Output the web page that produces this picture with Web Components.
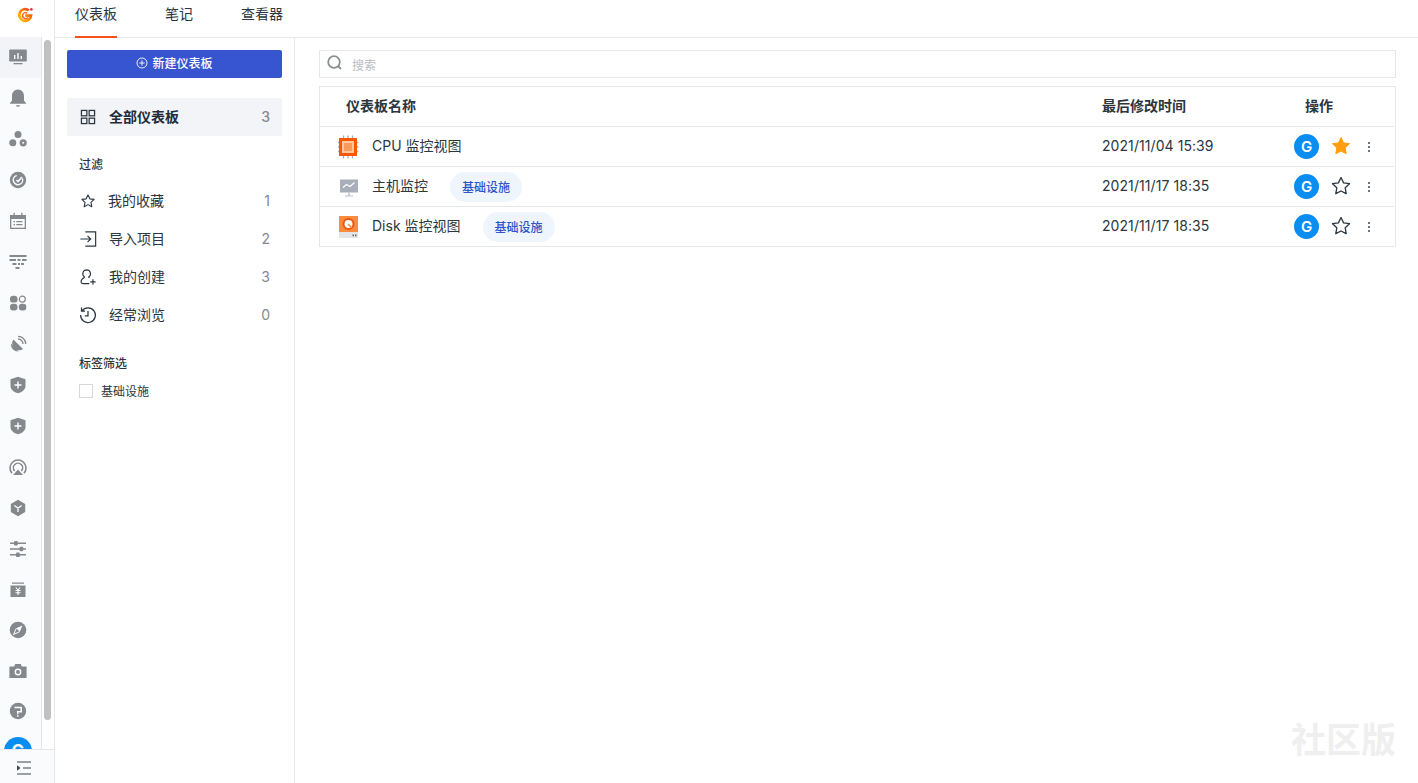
<!DOCTYPE html>
<html lang="zh">
<head>
<meta charset="utf-8">
<style>
html,body{margin:0;height:100%;overflow:hidden;background:#fff}
body{font-family:Inter,"Noto Sans CJK SC",sans-serif;color:#1f2d3a}
</style>
</head>
<body>
<x-app></x-app>
<script>
const ic={
monitor:'<path fill="currentColor" d="M2 2.500h16a.8.8 0 0 1 .8.8v10.400a.8.8 0 0 1-.8.8H2a.8.8 0 0 1-.8-.8V3.300a.8.8 0 0 1 .8-.8z"/><path fill="#fff" d="M6 8h1.400v4H6zM9.300 6h1.400v6H9.300zM12.600 9h1.400v3h-1.400z"/><path fill="currentColor" d="M5.500 16h9v1.300h-9z"/>',
bell:'<path fill="currentColor" d="M10 1.500c3.900 0 6 3 6 6.500v4.800l2 2.200v.8H2V15l2-2.200V8c0-3.500 2.100-6.500 6-6.500z"/><path fill="currentColor" d="M8 17.200h4a2 1.500 0 0 1-4 0z"/>',
cluster:'<circle fill="currentColor" cx="10" cy="5.500" r="3.500"/><circle fill="currentColor" cx="4.800" cy="13.800" r="3.500"/><circle fill="none" stroke="currentColor" stroke-width="2.600" cx="15.200" cy="13.800" r="2.300"/>',
check:'<circle fill="currentColor" cx="10" cy="10" r="8.200"/><circle fill="none" stroke="#fafbfd" stroke-width="1.500" cx="10" cy="10" r="4.700" stroke-dasharray="22 8" transform="rotate(-20 10 10)"/><path fill="none" stroke="#fafbfd" stroke-width="1.600" d="M8.500 10l1.500 1.500 4-4.500"/>',
calendar:'<path fill="currentColor" d="M2 4h16v14H2z"/><path fill="#fafbfd" d="M3.300 8h13.400v8.700H3.300z"/><path fill="currentColor" d="M5.500 1.800h1.300V5H5.500zM13.200 1.800h1.300V5h-1.300zM5.500 10h1.500v1.200H5.500zM8.300 10h6.200v1.200H8.300zM5.500 13h1.500v1.200H5.500zM8.300 13h6.200v1.200H8.300z"/>',
filter:'<path fill="currentColor" d="M1.500 3h17v2h-17zM1.500 7h6.500v2H1.500zM9.500 7h3v2h-3zM14 7h4.500v2H14zM4.500 11h4v2h-4zM10 11h2v2h-2zM13 11h3v2h-3zM7.500 15h4v2h-4z"/>',
apps:'<rect fill="currentColor" x="2" y="2.800" width="7.500" height="6.800" rx="3.200"/><circle fill="none" stroke="currentColor" stroke-width="1.200" cx="14.300" cy="6.200" r="3"/><rect fill="currentColor" x="2" y="10.800" width="7.500" height="6.800" rx="3"/><rect fill="currentColor" x="10.800" y="10.800" width="7.500" height="6.800" rx="3"/>',
dish:'<path fill="currentColor" d="M5.500 5.500l9.500 9.500a6.800 6.800 0 0 1-9.500-9.500z"/><path fill="currentColor" d="M3 9.500a7.200 7.200 0 0 0 7.500 8L3 9.500z"/><path fill="none" stroke="currentColor" stroke-width="1.300" d="M10 5a5 5 0 0 1 5 5M10 2.300a7.700 7.700 0 0 1 7.700 7.700"/>',
shield:'<path fill="currentColor" d="M10 1.800l7.500 2.400v6.800c0 3.700-3.300 6-7.500 7.300-4.200-1.300-7.500-3.600-7.500-7.300V4.200z"/><path fill="#fff" d="M9.300 6.500h1.400v2.800h2.800v1.400h-2.800v2.800H9.300v-2.800H6.500V9.300h2.800z"/>',
cast:'<path fill="none" stroke="currentColor" stroke-width="1.600" d="M3.900 16.200a8 8 0 1 1 12.200 0M6.700 14a4.600 4.600 0 1 1 6.600 0"/><path fill="currentColor" d="M10 12.500l5 5.500H5z"/>',
hex:'<path fill="currentColor" d="M10 1.800l7.200 4.100v8.200L10 18.200l-7.200-4.100V5.900z"/><path fill="none" stroke="#fff" stroke-width="1.300" d="M6.300 7.500L10 10l3.700-2.500M10 10v4"/>',
sliders:'<path fill="currentColor" d="M2 3.500h16v1.500H2zM2 9.300h16v1.500H2zM2 15.100h16v1.500H2z"/><rect fill="currentColor" x="6" y="2" width="3.800" height="4.500" rx="1.200"/><rect fill="currentColor" x="11.500" y="7.800" width="3.800" height="4.500" rx="1.200"/><rect fill="currentColor" x="8" y="13.600" width="3.800" height="4.500" rx="1.200"/>',
yuan:'<path fill="currentColor" d="M4 2.500h12v1.300H4zM2.500 5.500h15v11.500h-15z"/><path fill="none" stroke="#fff" stroke-width="1.100" d="M7.800 7.500L10 10l2.200-2.500M7.500 10.500h5M7.500 12.700h5M10 10v5"/>',
compass:'<circle fill="currentColor" cx="10" cy="10" r="8.300"/><path fill="#fff" d="M14.500 5.500l-2.800 6.200-3.400-3.400z"/><path fill="none" stroke="#fff" stroke-width="1" d="M8.300 8.300l-2.800 6.200 6.200-2.800"/>',
camera:'<path fill="currentColor" d="M2 5.500h4.200l1-2.500h5.600l1 2.500H18a.6.6 0 0 1 .6.600v10.300a.6.6 0 0 1-.6.600H2a.6.6 0 0 1-.6-.6V6.100a.6.6 0 0 1 .6-.6z"/><circle fill="none" stroke="#fff" stroke-width="1.400" cx="10" cy="11" r="2.700"/>',
help:'<circle fill="currentColor" cx="10" cy="10" r="8.200"/><path fill="none" stroke="#fff" stroke-width="1.500" d="M6.500 6.500h6.700v4.300H9.700v2.400"/><path fill="#fff" d="M9 14.300h1.500v1.400H9z"/>',
grid:'<g fill="none" stroke="currentColor" stroke-width="1.400"><rect x="2.700" y="2.700" width="6" height="6"/><rect x="11.300" y="2.700" width="6" height="6"/><rect x="2.700" y="11.300" width="6" height="6"/><rect x="11.300" y="11.300" width="6" height="6"/></g>',
star:'<path fill="none" stroke="currentColor" stroke-width="1.200" stroke-linejoin="round" d="M10 3.200l2 4.400 4.800.6-3.500 3.300.9 4.800L10 14l-4.200 2.300.9-4.800-3.500-3.300 4.800-.6z"/>',
import:'<path fill="none" stroke="currentColor" stroke-width="1.300" d="M7 2h11.500v16H7M1.500 10H13M9.500 6.500L13 10l-3.500 3.500"/>',
user:'<path fill="none" stroke="currentColor" stroke-width="1.300" stroke-linecap="round" d="M8.500 2a4.300 4.300 0 0 1 2.600 7.700c-.4.300-.3 1 .2 1.100M8.500 2a4.300 4.300 0 0 0-2.600 7.700c.4.300.3.900-.2 1.100C3.500 11.800 2.300 13.600 2.300 15.300c0 1.200.8 2 2 2H11M15.500 13v5M13 15.500h5"/>',
history:'<path fill="none" stroke="currentColor" stroke-width="1.400" d="M3.300 5.500A8.200 8.200 0 1 1 1.800 10M2.800 1.800v3.900h3.900M10 5.500V11H6.500"/>',
};
function svg(name,s){return `<svg width="${s}" height="${s}" viewBox="0 0 20 20" aria-hidden="true">${ic[name]}</svg>`}

class XRail extends HTMLElement{
  constructor(){super();
    const names=['monitor','bell','cluster','check','calendar','filter','apps','dish','shield','shield','cast','hex','sliders','yuan','compass','camera','help'];
    const rows=names.map((n,i)=>`<div class="row${i===0?' active':''}${i>=14?' short':''}">${svg(n,20)}</div>`).join('');
    this.attachShadow({mode:'open'}).innerHTML=`<style>
    :host{display:flex;flex-direction:column;width:55px;height:100vh;flex:none;box-sizing:border-box;border-right:1px solid #e5e7eb;background:#fafbfd;color:#85888d}
    .logo{height:37px;flex:none;background:#fff;display:flex;align-items:center;justify-content:center;padding:0 4px 7px 0;box-sizing:border-box}
    .scroll{flex:1;min-height:0;display:flex;overflow:hidden}
    .list{width:41px;flex:none;overflow:hidden;border-right:1px solid #e3e5e8}
    .row{height:41px;display:flex;align-items:center;justify-content:center;padding:0 5px 1px 0;box-sizing:border-box}
    .row.short{height:40px;padding-bottom:2px}
    .row.short:nth-child(n+16){padding-bottom:0}
    .row.last{height:40px;padding-bottom:0}
    .active{background:#f2f4f7}
    .av{width:28px;height:28px;flex:none;border-radius:50%;background:#0a8df0;color:#fff;font:700 17px/28px Inter,sans-serif;text-align:center}
    .track{flex:1;padding:3px 0 0 2px;background:#fff}
    .thumb{width:7px;height:680px;border-radius:4px;background:#c1c1c1}
    .toggle{height:34px;flex:none;box-sizing:border-box;border-top:1px solid #e5e7eb;display:flex;align-items:center;justify-content:center;padding:2px 6px 0 0;color:#3d4248}
    </style>
    <div class="logo"><svg width="16" height="16" viewBox="0 0 16 16" aria-hidden="true"><defs><linearGradient id="lg" x1="0" y1="1" x2="1" y2="0"><stop offset="0" stop-color="#ffc400"/><stop offset=".5" stop-color="#ff8a00"/><stop offset="1" stop-color="#f0322a"/></linearGradient></defs><path fill="none" stroke="url(#lg)" stroke-width="2.700" d="M11.800 3.400A5.900 5.900 0 1 0 14 8.600H8.200"/><path fill="none" stroke="#ff6a1a" stroke-width="1.500" d="M10.200 6.300A2.900 2.900 0 1 0 10.800 10.400"/><circle cx="14.400" cy="2.400" r="1.300" fill="#ef2f2f"/></svg></div>
    <div class="scroll"><div class="list">${rows}<div class="row last"><div class="av">G</div></div></div><div class="track"><div class="thumb"></div></div></div>
    <div class="toggle"><svg width="16" height="14" viewBox="0 0 16 14" aria-hidden="true"><path fill="currentColor" d="M1 .5h14v1H1zM7 6.500h8v1H7zM1 12.500h14v1H1z"/><path fill="currentColor" d="M1 4.300L4.500 7 1 9.700z"/></svg></div>`;
  }
}
class XTabs extends HTMLElement{
  constructor(){super();
    this.attachShadow({mode:'open'}).innerHTML=`<style>
    :host{display:flex;height:38px;flex:none;box-sizing:border-box;border-bottom:1px solid #e5e7eb;padding-left:20px;gap:48px;font-size:14px}
    ::slotted(*){display:block}
    </style><slot></slot>`;
  }
}
class XTab extends HTMLElement{
  constructor(){super();
    this.attachShadow({mode:'open'}).innerHTML=`<style>
    :host{display:block;height:38px;box-sizing:border-box;line-height:28px;color:#2b3640}
    :host([active]){border-bottom:2px solid #f4511e}
    </style><slot></slot>`;
  }
}
class XNavItem extends HTMLElement{
  constructor(){super();
    const icon=this.getAttribute('icon'),count=this.getAttribute('count');
    this.attachShadow({mode:'open'}).innerHTML=`<style>
    :host{display:flex;align-items:center;height:38px;padding:0 12px;font-size:14px;color:#2b3640}
    :host([active]){background:#f2f4f7;font-weight:600;border-radius:2px;color:#1f2d3a}
    :host([icon=star]) .i{margin-right:11px}
    .i{width:18px;height:18px;margin-right:12px;flex:none;display:flex;color:#2b3640}
    .t{flex:1;padding-bottom:2px}
    .c{color:#85888d;font-weight:400;padding-bottom:2px}
    :host([active]) .c{font-weight:500}
    </style><span class="i">${svg(icon,18)}</span><span class="t"><slot></slot></span><span class="c">${count}</span>`;
  }
}
class XSidebar extends HTMLElement{
  constructor(){super();
    this.attachShadow({mode:'open'}).innerHTML=`<style>
    :host{display:block;width:240px;flex:none;box-sizing:border-box;border-right:1px solid #e5e7eb;padding:12px 12px 0;background:#fff}
    button{display:flex;align-items:center;justify-content:center;gap:4px;width:100%;height:28px;border:0;border-radius:2px;background:#3755d0;color:#fff;font:500 12px Inter,"Noto Sans CJK SC",sans-serif;padding:0 0 3px}
    .all{margin-top:20px}
    h4{margin:0;font-size:12px;font-weight:500;line-height:18px;color:#2b3640;padding-left:12px}
    .f{margin-top:20px;margin-bottom:8px}
    .l{margin-top:21px;margin-bottom:9px}
    .cb{display:flex;align-items:center;gap:8px;padding-left:12px;font-size:12px;color:#2b3640}
    .cb i{width:12px;height:12px;border:1px solid #d5d8dc;display:block;background:#fff;flex:none}
    .cb span{padding-top:0}
    </style>
    <button><svg width="12" height="12" viewBox="0 0 12 12" aria-hidden="true"><circle cx="6" cy="6" r="5" fill="none" stroke="#fff" stroke-width=".9"/><path d="M6 3.300v5.400M3.300 6h5.400" stroke="#fff" stroke-width=".9"/></svg>新建仪表板</button>
    <div class="all"><x-nav-item icon="grid" count="3" active>全部仪表板</x-nav-item></div>
    <h4 class="f">过滤</h4>
    <x-nav-item icon="star" count="1">我的收藏</x-nav-item>
    <x-nav-item icon="import" count="2">导入项目</x-nav-item>
    <x-nav-item icon="user" count="3">我的创建</x-nav-item>
    <x-nav-item icon="history" count="0">经常浏览</x-nav-item>
    <h4 class="l">标签筛选</h4>
    <label class="cb"><i></i><span>基础设施</span></label>`;
  }
}
class XSearch extends HTMLElement{
  constructor(){super();
    this.attachShadow({mode:'open'}).innerHTML=`<style>
    :host{display:flex;align-items:center;height:28px;box-sizing:border-box;border:1px solid #e5e7eb;padding-left:7px;font-size:12px;color:#b9bcc1;gap:9px}
    svg{margin-top:-2px}
    </style><svg width="16" height="16" viewBox="0 0 16 16" aria-hidden="true"><circle cx="7" cy="7" r="5.800" fill="none" stroke="#8a8d91" stroke-width="1.800"/><path d="M11 11l3 3" stroke="#8a8d91" stroke-width="1.800"/></svg><span>搜索</span>`;
  }
}
class XTag extends HTMLElement{
  constructor(){super();
    this.attachShadow({mode:'open'}).innerHTML=`<style>
    :host{display:inline-flex;align-items:center;justify-content:center;width:72px;height:30px;border-radius:15px;background:#eef5fd;color:#2f54c8;font-size:12px;font-weight:500}
    </style><slot></slot>`;
  }
}
const fileIcons={
cpu:'<svg width="20" height="20" viewBox="0 0 20 20" aria-hidden="true" style="overflow:visible"><path stroke="#a9adb3" stroke-width="1.300" d="M5.500-1.500v3M10-1.500v3M14.500-1.500v3M5.500 18.500v3M10 18.500v3M14.500 18.500v3M0 5.500h3M0 10h3M0 14.500h3M17.500 5.500h3M17.500 10h3M17.500 14.500h3"/><rect x="1" y="1" width="18" height="18" fill="#f95700"/><rect x="4" y="4" width="12" height="12" fill="#ffc79e"/><rect x="6" y="6" width="8" height="8" fill="#fb9a5a"/></svg>',
mon:'<svg width="20" height="20" viewBox="0 0 20 20" aria-hidden="true"><rect x="2" y="2.500" width="18" height="13" fill="#a9afb9"/><path fill="none" stroke="#fff" stroke-width="1.200" d="M5 10.500l3.500-3 3.500 2 4.500-4"/><path fill="#bcc1c9" d="M10.300 15.500h1.400v3h-1.400zM7 18.500h8v1H7z"/></svg>',
disk:'<svg width="20" height="22" viewBox="0 0 20 22" aria-hidden="true"><rect x="1" y="0" width="19" height="16" fill="#fc8b3e"/><rect x="1" y="16" width="19" height="6" fill="#e3e5e8"/><circle cx="10.500" cy="8" r="5" fill="#fff" stroke="#e8590f" stroke-width="2"/><path stroke="#fc8b3e" stroke-width="1.600" d="M10 8l4 4"/><path fill="#666" d="M14.500 18.500h1.500v1.700h-1.500zM17 18.500h1.500v1.700H17z"/></svg>'
};
class XRow extends HTMLElement{
  constructor(){super();
    const tag=this.getAttribute('tag'),fav=this.hasAttribute('fav');
    const d='M10 1.500l2.600 5.400 5.900.8-4.300 4.100 1 5.900L10 15l-5.200 2.700 1-5.900-4.300-4.100 5.900-.8z';
    const star=fav?`<path fill="#ff9f0f" stroke="#ff9f0f" stroke-width="1" stroke-linejoin="round" d="${d}"/>`:`<path fill="none" stroke="#2b3640" stroke-width="1.300" stroke-linejoin="round" d="${d}"/>`;
    this.attachShadow({mode:'open'}).innerHTML=`<style>
    :host{display:grid;grid-template-columns:782px 192px 1fr;align-items:center;height:40px;box-sizing:border-box;border-bottom:1px solid #e5e7eb;font-size:14px;color:#2b3640;margin-right:1px}
    .n{display:flex;align-items:center;padding-left:18px}
    .ic{width:20px;display:flex;margin-right:14px;flex:none}
    .lb{padding-bottom:4px}
    x-tag{margin-left:22px}
    .tm{padding-bottom:2px;letter-spacing:.07px}
    .a{display:flex;align-items:center}
    .av{width:25px;height:25px;border-radius:50%;background:#0a8df0;color:#fff;font:600 15px/25px Inter,sans-serif;text-align:center;flex:none}
    .st{margin-left:12px;display:flex;margin-top:-2px}
    .more{margin-left:12px;display:flex}
    </style>
    <div class="n"><span class="ic">${fileIcons[this.getAttribute('icon')]}</span><span class="lb"><slot></slot></span>${tag?`<x-tag>${tag}</x-tag>`:''}</div>
    <div class="tm">${this.getAttribute('time')}</div>
    <div class="a"><span class="av">G</span><span class="st"><svg width="20" height="20" viewBox="0 0 20 20" aria-hidden="true">${star}</svg></span><span class="more"><svg width="12" height="12" viewBox="0 0 12 12" aria-hidden="true"><circle cx="6" cy="2" r="1" fill="#3d4650"/><circle cx="6" cy="6" r="1" fill="#3d4650"/><circle cx="6" cy="10" r="1" fill="#3d4650"/></svg></span></div>`;
  }
}
class XTable extends HTMLElement{
  constructor(){super();
    this.attachShadow({mode:'open'}).innerHTML=`<style>
    :host{display:block;box-sizing:border-box;border:1px solid #e5e7eb;border-bottom:0;margin-top:8px}
    .h{display:grid;grid-template-columns:782px 203px 1fr;align-items:center;height:40px;box-sizing:border-box;border-bottom:1px solid #e5e7eb;font-size:14px;font-weight:600;color:#2b3640;margin-right:1px;padding-bottom:4px}
    .h div:first-child{padding-left:26px}
    </style>
    <div class="h"><div>仪表板名称</div><div>最后修改时间</div><div>操作</div></div>
    <slot></slot>`;
  }
}
class XMain extends HTMLElement{
  constructor(){super();
    this.attachShadow({mode:'open'}).innerHTML=`<style>
    :host{display:block;flex:1;min-width:0;box-sizing:border-box;padding:12px 22px 0 24px;position:relative}
    .wm{position:absolute;right:22px;bottom:23px;font-size:35px;font-weight:700;line-height:40px;color:#efefef}
    </style><slot></slot><div class="wm">社区版</div>`;
  }
}
class XApp extends HTMLElement{
  constructor(){super();
    this.attachShadow({mode:'open'}).innerHTML=`<style>
    :host{display:flex;height:100vh;overflow:hidden}
    .col{flex:1;min-width:0;display:flex;flex-direction:column}
    .body{flex:1;min-height:0;display:flex}
    </style>
    <x-rail></x-rail>
    <div class="col">
      <x-tabs><x-tab active>仪表板</x-tab><x-tab>笔记</x-tab><x-tab>查看器</x-tab></x-tabs>
      <div class="body"><x-sidebar></x-sidebar>
        <x-main><x-search></x-search>
          <x-table>
            <x-row icon="cpu" time="2021/11/04 15:39" fav>CPU 监控视图</x-row>
            <x-row icon="mon" time="2021/11/17 18:35" tag="基础设施">主机监控</x-row>
            <x-row icon="disk" time="2021/11/17 18:35" tag="基础设施">Disk 监控视图</x-row>
          </x-table>
        </x-main>
      </div>
    </div>`;
  }
}
for(const [n,c] of [['x-tag',XTag],['x-rail',XRail],['x-tab',XTab],['x-tabs',XTabs],['x-nav-item',XNavItem],['x-sidebar',XSidebar],['x-search',XSearch],['x-row',XRow],['x-table',XTable],['x-main',XMain],['x-app',XApp]])customElements.define(n,c);
</script>
</body>
</html>
